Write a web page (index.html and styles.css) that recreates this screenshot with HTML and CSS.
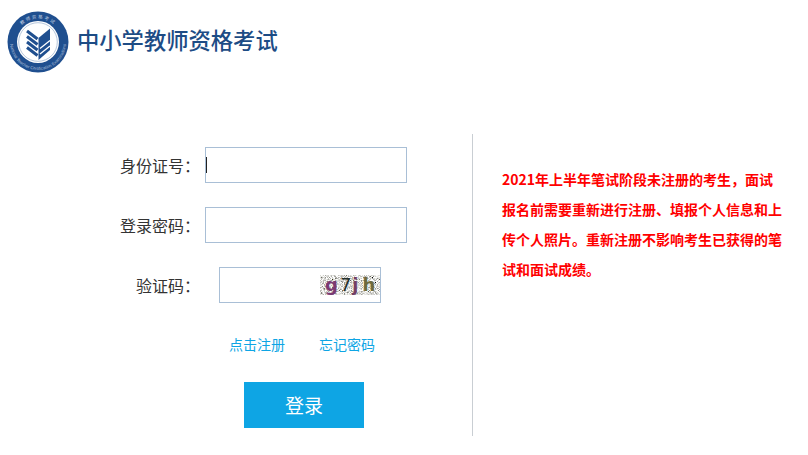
FILE: index.html
```html
<!DOCTYPE html>
<html lang="zh-CN">
    <head>
        <meta charset="utf-8">
        <title>中小学教师资格考试</title>
        <link rel="stylesheet" href="styles.css">
    </head>
    <body>
        <div class="header">
            <svg class="logo" width="62" height="62" viewBox="0 0 62 62">
                <defs>
                    <path id="ringtop" d="M7.500 31a23.500 23.500 0 0 1 47 0"/>
                    <path id="ringbottom" d="M4.700 21.400a28 28 0 1 0 52.600 0"/>
                </defs>
                <circle cx="31" cy="31" r="30.500" fill="#1f4f8f"/>
                <circle cx="31" cy="31" r="21" fill="#fff"/>
                <circle cx="31" cy="31" r="19.300" fill="none" stroke="#6f8fb8" stroke-width=".5"/>
                <text class="ring-cn" fill="#c4d2e4" text-anchor="middle"><textPath href="#ringtop" startOffset="50%">教师资格考试</textPath></text>
                <text class="ring-en" fill="#a9bdd8" text-anchor="middle"><textPath href="#ringbottom" startOffset="50%">National Teacher Certification Examinations</textPath></text>
                <path fill="#1f4f8f" d="M31.500 27L43 17.500V39L31.500 49Z"/>
                <path fill="none" stroke="#1f4f8f" stroke-width="3" d="M20 20L30.500 28M20 25.500L30.500 33.500M20 31L30.500 39M20 36.500L30.500 44.500"/>
                <path fill="none" stroke="#fff" stroke-width="1.300" d="M33 37.500L43 29.500M33 43L43 35"/>
            </svg>
            <div class="site-title">中小学教师资格考试</div>
        </div>

        <div class="main">
            <div class="login">
                <div class="row">
                    <label class="row-label">身份证号：</label>
                    <div class="box box-wide"><span class="caret"></span></div>
                </div>
                <div class="row">
                    <label class="row-label">登录密码：</label>
                    <div class="box box-wide"></div>
                </div>
                <div class="row">
                    <label class="row-label">验证码：</label>
                    <div class="box box-code">
                        <div class="captcha">
                            <svg class="noise" width="60" height="20">
                                <filter id="speckle">
                                    <feTurbulence type="fractalNoise" baseFrequency="0.9" numOctaves="2" seed="4"/>
                                    <feColorMatrix type="saturate" values="0"/>
                                    <feComponentTransfer>
                                        <feFuncR type="linear" slope="3" intercept="-0.750"/>
                                        <feFuncG type="linear" slope="3" intercept="-0.750"/>
                                        <feFuncB type="linear" slope="3" intercept="-0.780"/>
                                        <feFuncA type="linear" slope="0" intercept="1"/>
                                    </feComponentTransfer>
                                </filter>
                                <rect width="60" height="20" filter="url(#speckle)"/>
                            </svg>
                            <span class="c1">g</span><span class="c2">7</span><span class="c3">j</span><span class="c4">h</span>
                        </div>
                    </div>
                </div>
                <div class="links">
                    <a href="#">点击注册</a>
                    <a href="#">忘记密码</a>
                </div>
                <div class="submit">登录</div>
            </div>
            <div class="notice">
                <p>2021年上半年笔试阶段未注册的考生，面试报名前需要重新进行注册、填报个人信息和上传个人照片。重新注册不影响考生已获得的笔试和面试成绩。</p>
            </div>
        </div>
    </body>
</html>
```
FILE: styles.css
```css
html, body {
    margin: 0;
    padding: 0;
    background: #fff;
}

body {
    font-family: "Noto Sans CJK SC", "Noto Sans", sans-serif;
    overflow: hidden;
}

.header {
    display: flex;
    align-items: center;
    gap: 8px;
    padding: 11px 0 0 7px;
}

.logo {
    flex: none;
}

.ring-cn {
    font-size: 4.500px;
    letter-spacing: 1.500px;
}

.ring-en {
    font-family: "Liberation Sans", sans-serif;
    font-size: 4.300px;
}

.site-title {
    font-size: 22.300px;
    font-weight: 500;
    line-height: 30px;
    color: #1d4c85;
    margin-top: -6px;
}

.main {
    display: flex;
    margin-top: 61px;
    height: 302px;
}

.login {
    width: 472px;
    padding-top: 13px;
    box-sizing: border-box;
}

.row {
    display: flex;
    align-items: center;
    height: 36px;
    margin-bottom: 24px;
}

.row-label {
    width: 200px;
    text-align: right;
    font-size: 16px;
    color: #333;
    white-space: nowrap;
}

.box {
    position: relative;
    height: 36px;
    box-sizing: border-box;
    border: 1px solid #a9bfd6;
    background: #fff;
}

.box-wide {
    width: 202px;
    margin-left: 5px;
}

.box-code {
    width: 162px;
    margin-left: 19px;
}

.caret {
    position: absolute;
    left: 0;
    top: 9px;
    width: 1px;
    height: 16px;
    background: #222;
}

.captcha {
    position: absolute;
    right: 0;
    top: 7px;
    display: flex;
    box-sizing: border-box;
    width: 60px;
    height: 20px;
    padding-left: 5px;
    font-family: "DejaVu Sans", sans-serif;
    font-size: 18px;
    font-weight: bold;
    line-height: 20px;
}

.noise {
    position: absolute;
    left: 0;
    top: 0;
}

.captcha span {
    position: relative;
}

.c1 { color: #7a3a72; }
.c2 { color: #25302c; font-weight: normal; margin-left: 2px; }
.c3 { color: #733f63; margin-left: 1px; }
.c4 { color: #6d6a3c; margin-left: 4px; }

.links {
    display: flex;
    gap: 34px;
    padding-left: 229px;
    margin-top: -4px;
    font-size: 14px;
    line-height: 42px;
}

.links a {
    color: #0ea5e4;
    text-decoration: none;
}

.submit {
    width: 120px;
    height: 46px;
    margin: 17px 0 0 244px;
    background: #0ea5e4;
    color: #fff;
    font-size: 19px;
    line-height: 46px;
    text-align: center;
}

.notice {
    flex: 1;
    border-left: 1px solid #c9ced3;
    padding: 30px 25px 0 29px;
}

.notice p {
    margin: 0;
    font-size: 14px;
    font-weight: bold;
    line-height: 30px;
    color: #f00;
}
```
